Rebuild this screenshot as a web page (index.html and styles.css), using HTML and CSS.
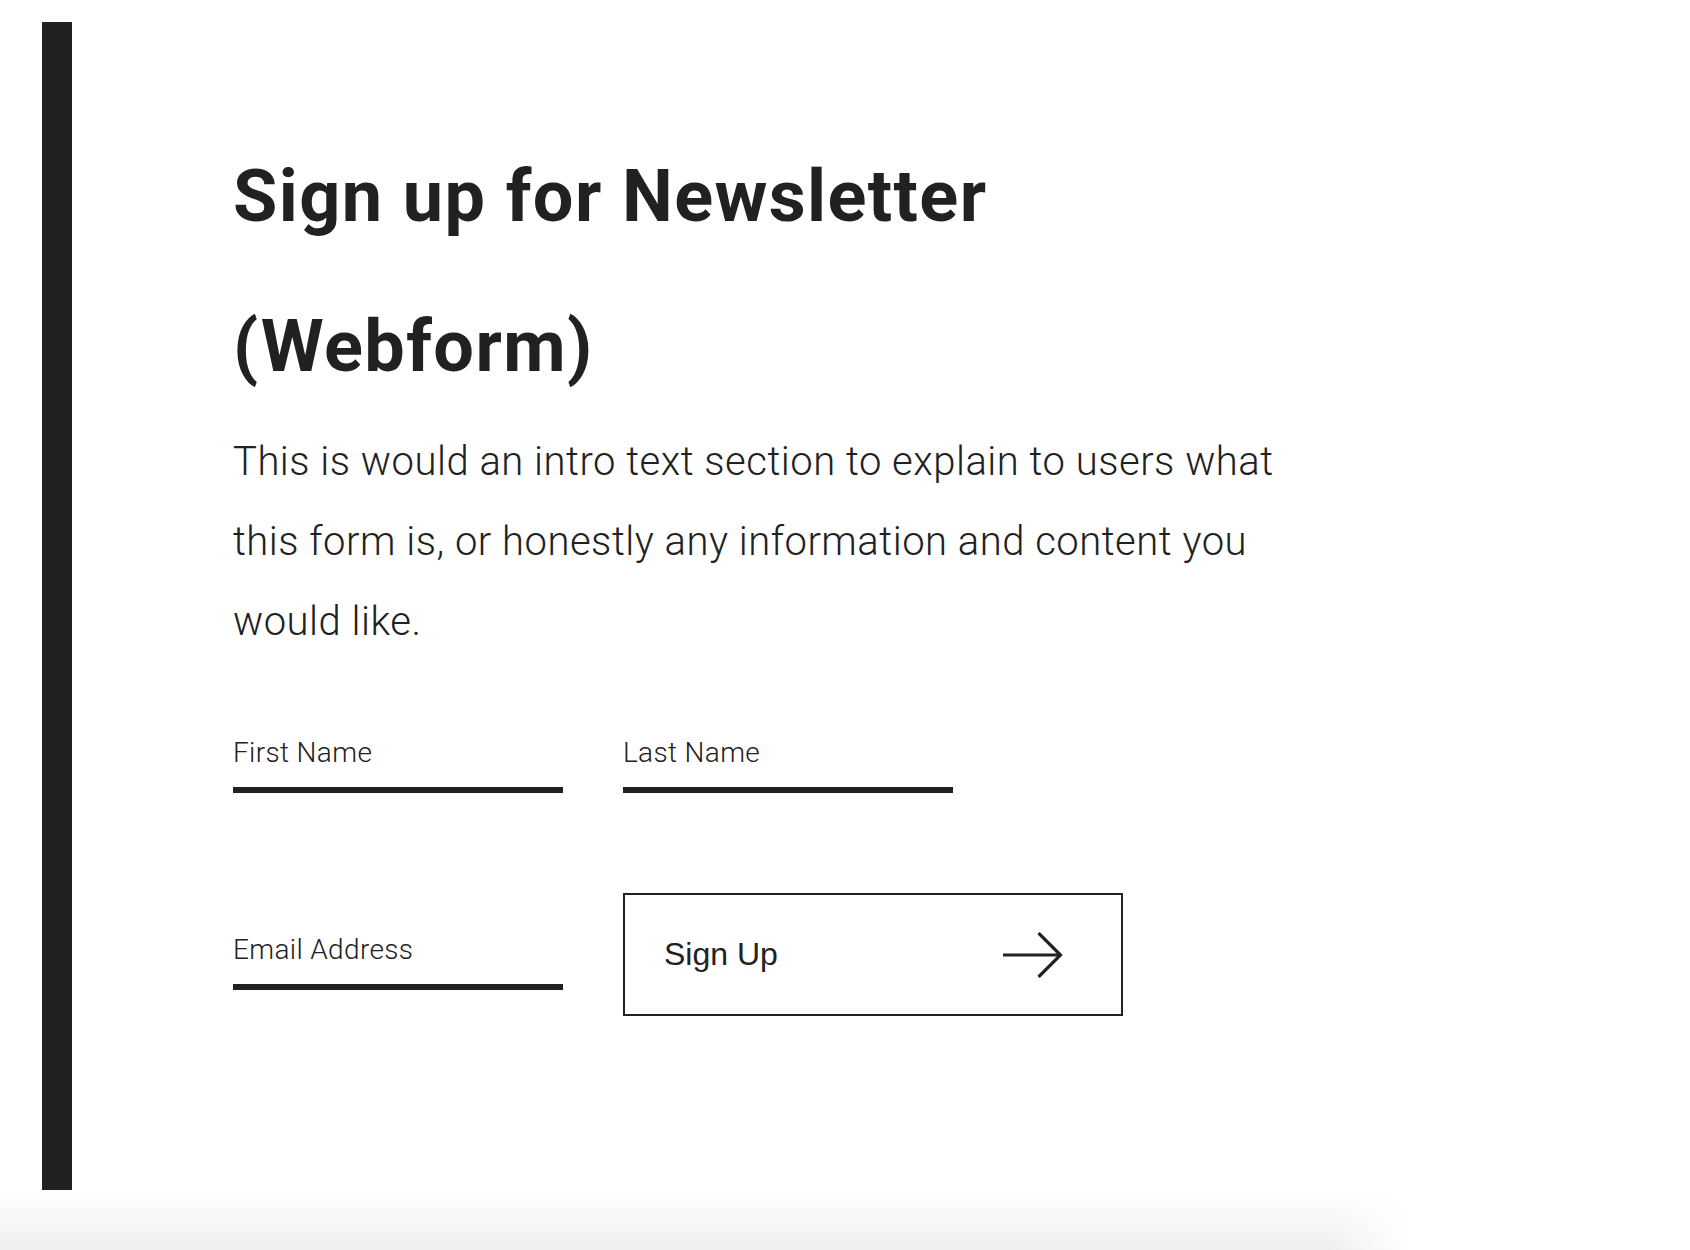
FILE: index.html
```html
<!DOCTYPE html>
<html lang="en">
<head>
<meta charset="utf-8">
<title>Sign up for Newsletter</title>
<link rel="stylesheet" href="styles.css">
</head>
<body>
<div class="page">
  <div class="bar"></div>
  <main class="content">
    <h1 class="title">Sign up for Newsletter (Webform)</h1>
    <p class="intro">This is would an intro text section to explain to users what this form is, or honestly any information and content you would like.</p>
    <form class="form">
      <label class="field">
        <span class="label">First Name</span>
        <input class="input" type="text">
      </label>
      <label class="field">
        <span class="label">Last Name</span>
        <input class="input" type="text">
      </label>
      <label class="field field-email">
        <span class="label">Email Address</span>
        <input class="input" type="email">
      </label>
      <button class="submit" type="button">
        <span class="submit-text">Sign Up</span>
        <svg class="arrow" width="60" height="46" viewBox="0 0 60 46" aria-hidden="true">
          <path d="M0 23 H57" stroke="#222" stroke-width="3.2" fill="none"/>
          <path d="M35.5 1 L57.5 23 L35.5 45" stroke="#222" stroke-width="3.2" fill="none"/>
        </svg>
      </button>
    </form>
  </main>
</div>
<div class="shade"></div>
</body>
</html>
```
FILE: styles.css
```css
* { box-sizing: border-box; }
html, body { margin: 0; padding: 0; background: #fff; }
body { color: #212121; font-family: Roboto, "Liberation Sans", sans-serif; overflow: hidden; }

.page {
  display: flex;
  height: 1190px;
}
.bar {
  margin-left: 42px;
  margin-top: 22px;
  width: 30px;
  height: 1168px;
  background: #212121;
  flex: none;
}
.content {
  padding-left: 161px;
  padding-top: 122px;
}
.title {
  margin: 0;
  width: 900px;
  font-family: Roboto, sans-serif;
  font-weight: 700;
  font-size: 72px;
  line-height: 150px;
  letter-spacing: 1.4px;
  color: #212121;
}
.intro {
  margin: 0;
  width: 1110px;
  font-family: Roboto, sans-serif;
  font-weight: 300;
  font-size: 40px;
  line-height: 80px;
  letter-spacing: 0.5px;
  color: #212121;
}
.form {
  margin-top: 74px;
  display: grid;
  grid-template-columns: 330px auto;
  column-gap: 60px;
  row-gap: 100px;
  align-items: start;
  justify-items: start;
}
.field {
  display: flex;
  flex-direction: column;
  width: 330px;
}
.field-email { margin-top: 40px; }
.label {
  font-family: Roboto, sans-serif;
  font-weight: 300;
  font-size: 28px;
  line-height: 34px;
  letter-spacing: 0.35px;
  color: #212121;
}
.input {
  display: block;
  width: 100%;
  height: 23px;
  padding: 0;
  margin: 0;
  border: none;
  border-bottom: 6px solid #212121;
  background: transparent;
  outline: none;
}
.submit {
  width: 500px;
  height: 123px;
  border: 2px solid #212121;
  background: #fff;
  display: flex;
  align-items: center;
  justify-content: space-between;
  padding: 0 58px 0 39px;
  cursor: pointer;
}
.submit-text {
  font-family: "Liberation Sans", Arial, sans-serif;
  font-size: 32px;
  color: #212121;
}
.arrow { display: block; }

.shade {
  height: 60px;
  background: linear-gradient(to bottom, #ffffff, #efefef);
  -webkit-mask-image: linear-gradient(to right, #000 1330px, transparent 1410px);
  mask-image: linear-gradient(to right, #000 1330px, transparent 1410px);
}
```
